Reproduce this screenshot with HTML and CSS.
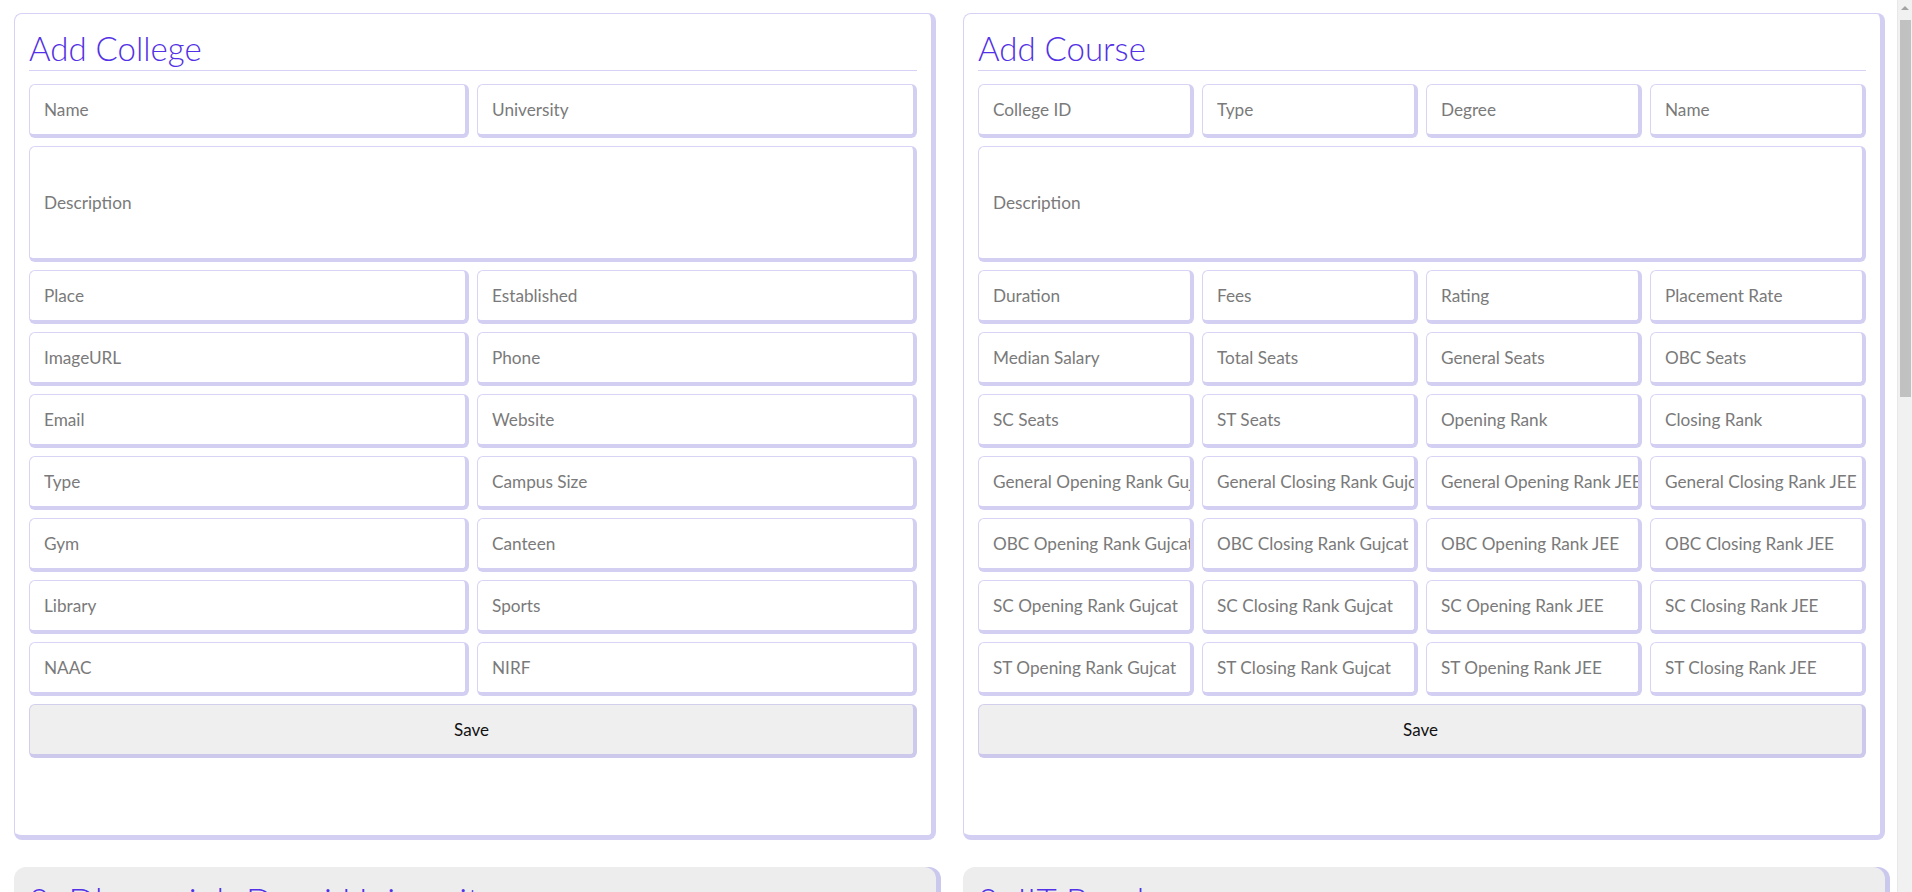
FILE: index.html
```html
<!DOCTYPE html>
<html lang="en">
<head>
<meta charset="utf-8">
<title>Admin</title>
<link rel="stylesheet" href="styles.css">
</head>
<body>
<div class="page">
  <section class="card">
    <h2 class="card-title">Add College</h2>
    <form class="form cols-2">
      <input class="field" placeholder="Name">
      <input class="field" placeholder="University">
      <input class="field desc span-all" placeholder="Description">
      <input class="field" placeholder="Place">
      <input class="field" placeholder="Established">
      <input class="field" placeholder="ImageURL">
      <input class="field" placeholder="Phone">
      <input class="field" placeholder="Email">
      <input class="field" placeholder="Website">
      <input class="field" placeholder="Type">
      <input class="field" placeholder="Campus Size">
      <input class="field" placeholder="Gym">
      <input class="field" placeholder="Canteen">
      <input class="field" placeholder="Library">
      <input class="field" placeholder="Sports">
      <input class="field" placeholder="NAAC">
      <input class="field" placeholder="NIRF">
      <button type="button" class="save span-all">Save</button>
    </form>
  </section>

  <section class="card">
    <h2 class="card-title">Add Course</h2>
    <form class="form cols-4">
      <input class="field" placeholder="College ID">
      <input class="field" placeholder="Type">
      <input class="field" placeholder="Degree">
      <input class="field" placeholder="Name">
      <input class="field desc span-all" placeholder="Description">
      <input class="field" placeholder="Duration">
      <input class="field" placeholder="Fees">
      <input class="field" placeholder="Rating">
      <input class="field" placeholder="Placement Rate">
      <input class="field" placeholder="Median Salary">
      <input class="field" placeholder="Total Seats">
      <input class="field" placeholder="General Seats">
      <input class="field" placeholder="OBC Seats">
      <input class="field" placeholder="SC Seats">
      <input class="field" placeholder="ST Seats">
      <input class="field" placeholder="Opening Rank">
      <input class="field" placeholder="Closing Rank">
      <input class="field" placeholder="General Opening Rank Gujcat">
      <input class="field" placeholder="General Closing Rank Gujcat">
      <input class="field" placeholder="General Opening Rank JEE">
      <input class="field" placeholder="General Closing Rank JEE">
      <input class="field" placeholder="OBC Opening Rank Gujcat">
      <input class="field" placeholder="OBC Closing Rank Gujcat">
      <input class="field" placeholder="OBC Opening Rank JEE">
      <input class="field" placeholder="OBC Closing Rank JEE">
      <input class="field" placeholder="SC Opening Rank Gujcat">
      <input class="field" placeholder="SC Closing Rank Gujcat">
      <input class="field" placeholder="SC Opening Rank JEE">
      <input class="field" placeholder="SC Closing Rank JEE">
      <input class="field" placeholder="ST Opening Rank Gujcat">
      <input class="field" placeholder="ST Closing Rank Gujcat">
      <input class="field" placeholder="ST Opening Rank JEE">
      <input class="field" placeholder="ST Closing Rank JEE">
      <button type="button" class="save span-all">Save</button>
    </form>
  </section>

  <section class="item">
    <h2 class="item-title">2: Dharmsinh Desai University</h2>
    <div class="item-body">
      <p>University: Dharmsinh Desai University</p>
      <p>Place: Nadiad</p>
      <p>Established: 1968</p>
      <p>Phone: 0268 2520502</p>
      <p>Email: info@ddu.ac.in</p>
      <p>Website: www.ddu.ac.in</p>
      <p>Type: Private</p>
      <p>Campus Size: 70 Acres</p>
      <p>Gym: Yes</p>
      <p>Canteen: Yes</p>
      <p>Library: Yes</p>
      <p>Sports: Yes</p>
      <p>NAAC: A</p>
      <p>NIRF: 201</p>
    </div>
  </section>

  <section class="item">
    <h2 class="item-title">2: IIT Bombay</h2>
    <div class="item-body">
      <p>College ID: 2</p>
      <p>Type: UG</p>
      <p>Degree: B.Tech</p>
      <p>Name: Computer Engineering</p>
      <p>Duration: 4 Years</p>
      <p>Fees: 200000</p>
      <p>Rating: 4.8</p>
      <p>Placement Rate: 98</p>
      <p>Median Salary: 2000000</p>
      <p>Total Seats: 120</p>
      <p>Opening Rank: 1</p>
      <p>Closing Rank: 67</p>
    </div>
  </section>
</div>

<div class="scrollbar" aria-hidden="true">
  <div class="scroll-arrow"></div>
  <div class="scroll-thumb"></div>
</div>
</body>
</html>
```

FILE: styles.css
```css
* {
  box-sizing: border-box;
}

html, body {
  margin: 0;
  padding: 0;
  background: #ffffff;
}

body {
  font-family: Lato, "Open Sans", sans-serif;
  color: #222;
}

.page {
  display: grid;
  grid-template-columns: 1fr 1fr;
  column-gap: 27px;
  row-gap: 27px;
  padding: 13px 27px 40px 14px;
  align-items: start;
}

.card {
  background: #ffffff;
  border: 1px solid #d6d2f5;
  border-right: 5px solid #d3cff3;
  border-bottom: 5px solid #d3cff3;
  border-radius: 8px;
  padding: 14px 14px 77px 14px;
}

.card-title {
  margin: 0;
  font-family: Lato, "Open Sans", sans-serif;
  font-size: 33px;
  font-weight: 300;
  line-height: 40px;
  color: #5331e6;
  padding-bottom: 2px;
  border-bottom: 1px solid #d6d2f5;
}

.form {
  display: grid;
  gap: 8px;
  margin-top: 13px;
}

.cols-2 {
  grid-template-columns: repeat(2, 1fr);
}

.cols-4 {
  grid-template-columns: repeat(4, 1fr);
}

.span-all {
  grid-column: 1 / -1;
}

.field {
  display: block;
  width: 100%;
  min-width: 0;
  height: 54px;
  margin: 0;
  padding: 0 0 0 14px;
  font-family: Lato, "Open Sans", sans-serif;
  font-size: 17.2px;
  color: #333;
  background: #ffffff;
  border: 1px solid #d8d4f6;
  border-right: 4px solid #d3cff3;
  border-bottom: 4px solid #d3cff3;
  border-radius: 6px;
  outline: none;
}

.field::placeholder {
  color: #7a7a7a;
  opacity: 1;
}

.desc {
  height: 116px;
}

.save {
  display: block;
  width: 100%;
  height: 54px;
  margin: 0;
  font-family: Lato, "Open Sans", sans-serif;
  font-size: 17px;
  color: #111;
  background: #efefef;
  border: 1px solid #d2cfec;
  border-right: 4px solid #ccc9ec;
  border-bottom: 4px solid #ccc9ec;
  border-radius: 6px;
  cursor: pointer;
}

.item {
  background: #ededed;
  border-radius: 12px;
  box-shadow: 5px 0 0 #cbc8ee;
  padding: 13px 14px 30px 15px;
  min-height: 1140px;
}

.item-title {
  margin: 0;
  font-family: Lato, "Open Sans", sans-serif;
  font-size: 35px;
  font-weight: 300;
  line-height: 40px;
  letter-spacing: 0.4px;
  color: #5331e6;
}

.item-body {
  margin-top: 16px;
  font-size: 18px;
  color: #444;
}

.item-body p {
  margin: 0 0 14px 0;
}

/* imitation of the browser's classic page scrollbar */
.scrollbar {
  position: fixed;
  top: 0;
  right: 0;
  width: 15px;
  height: 100vh;
  background: #f1f1f1;
  border-left: 1px solid #e8e8e8;
}

.scroll-arrow {
  width: 0;
  height: 0;
  margin: 6px auto 0;
  border-left: 4px solid transparent;
  border-right: 4px solid transparent;
  border-bottom: 4px solid #a3a3a3;
}

.scroll-thumb {
  position: absolute;
  top: 20px;
  left: 2px;
  width: 11px;
  height: 377px;
  background: #c1c1c1;
}
```
